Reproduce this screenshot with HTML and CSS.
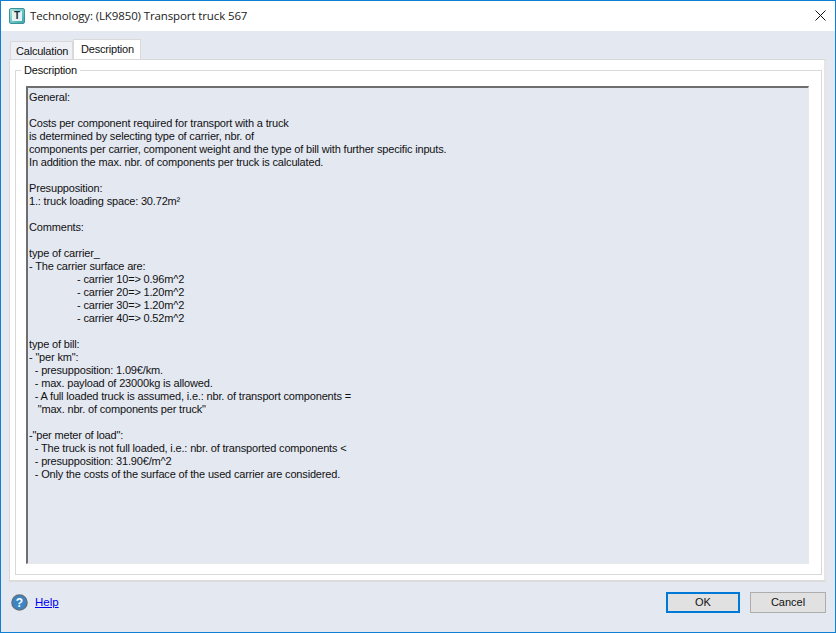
FILE: index.html
```html
<!DOCTYPE html>
<html lang="en">
<head>
<meta charset="utf-8">
<title>Technology</title>
<link rel="stylesheet" href="styles.css">
</head>
<body>
<div class="window">
  <header class="titlebar">
    <span class="app-icon"><span class="app-icon-face">T</span></span>
    <span class="title">Technology: (LK9850) Transport truck 567</span>
    <svg class="close" width="11" height="11" viewBox="0 0 11 11"><path d="M0.5 0.5L10.5 10.5M10.5 0.5L0.5 10.5" stroke="#111" stroke-width="1" fill="none"/></svg>
  </header>
  <main class="content">
    <nav class="tabs">
      <span class="tab">Calculation</span>
      <span class="tab tab-active">Description</span>
    </nav>
    <section class="panel">
      <fieldset class="group">
        <legend class="legend">Description</legend>
        <pre class="memo">General:

Costs per component required for transport with a truck
is determined by selecting type of carrier, nbr. of
components per carrier, component weight and the type of bill with further specific inputs.
In addition the max. nbr. of components per truck is calculated.

Presupposition:
1.: truck loading space: 30.72m²

Comments:

type of carrier_
- The carrier surface are:
<span class="indent">- carrier 10=&gt; 0.96m^2</span>
<span class="indent">- carrier 20=&gt; 1.20m^2</span>
<span class="indent">- carrier 30=&gt; 1.20m^2</span>
<span class="indent">- carrier 40=&gt; 0.52m^2</span>

type of bill:
- "per km":
  - presupposition: 1.09€/km.
  - max. payload of 23000kg is allowed.
  - A full loaded truck is assumed, i.e.: nbr. of transport components =
   "max. nbr. of components per truck"

-"per meter of load":
  - The truck is not full loaded, i.e.: nbr. of transported components &lt;
  - presupposition: 31.90€/m^2
  - Only the costs of the surface of the used carrier are considered.</pre>
      </fieldset>
    </section>
    <footer class="footer">
      <svg class="help-icon" width="17" height="17" viewBox="0 0 17 17">
        <circle cx="8.5" cy="8.5" r="7.5" fill="#3b86c6" stroke="#5f7181" stroke-width="1.6"/>
        <text x="8.5" y="13" text-anchor="middle" class="help-q">?</text>
      </svg>
      <a class="help-link" href="#">Help</a>
      <span class="spacer"></span>
      <button class="btn btn-default">OK</button>
      <button class="btn">Cancel</button>
    </footer>
  </main>
</div>
</body>
</html>
```
FILE: styles.css
```css
* { box-sizing: border-box; }
html, body { margin: 0; padding: 0; }
body { width: 836px; height: 633px; overflow: hidden; font-family: "Liberation Sans", Arial, sans-serif; }
.window { width: 836px; height: 633px; border: 1px solid #0f7fd6; display: flex; flex-direction: column; background: #e4e8f1; }
.titlebar { height: 30px; flex: none; background: #fff; display: flex; align-items: center; padding: 0 9px 0 8px; }
.app-icon { width: 16px; height: 16px; flex: none; padding: 2px; border-radius: 2px; background: linear-gradient(135deg, #a5e6e2, #3aa6ab); border: 1px solid #3d9299; }
.app-icon-face { display: block; width: 10px; height: 10px; background: #e6f3f2; color: #163035; font: bold 10px/10px "Liberation Sans", sans-serif; text-align: center; }
.title { margin-left: 5px; font: 11.5px/16px "Open Sans", sans-serif; letter-spacing: -0.12px; color: #222; flex: 1; }
.close { flex: none; margin-bottom: 1px; }
.content { flex: 1; display: flex; flex-direction: column; padding: 8px 8px 0 8px; min-height: 0; }
.tabs { display: flex; align-items: flex-end; height: 20px; padding-left: 1px; flex: none; }
.tab { height: 18px; width: 63px; padding: 3px 0 0 5px; font-size: 11px; line-height: 13px; letter-spacing: -0.2px; color: #111; background: #eef0f5; border: 1px solid #d9d9d9; border-bottom: 0; white-space: nowrap; }
.tab-active { height: 20px; width: 68px; background: #fff; padding: 3px 0 0 7px; }
.panel { height: 523px; flex: none; background: #fff; border: 1px solid #d9d9d9; border-right: 3px solid #e6e6e6; border-bottom: 2px solid #dcdcdc; padding: 3px 2px 5px 5px; }
.group { height: 100%; margin: 0; padding: 9px 11px 10px 10px; border: 1px solid #d9d9d9; background: #fff; min-width: 0; }
.legend { font-size: 11px; line-height: 14px; padding: 0 3px; margin-left: -5px; color: #111; letter-spacing: -0.2px; }
.memo { margin: 0; height: 478px; width: 783px; background: #e4e8f1; border-top: 2px solid #6e6e6e; border-left: 2px solid #6e6e6e; border-right: 1px solid #e8e8e8; border-bottom: 1px solid #e8e8e8; padding: 3px 0 0 1px; font: 11px/13px "Liberation Sans", sans-serif; letter-spacing: -0.17px; color: #111; overflow: hidden; white-space: pre; }
.indent { padding-left: 48px; }
.footer { flex: 1; display: flex; align-items: center; padding: 0 1px 10px 2px; }
.help-icon { flex: none; }
.help-q { font: bold 12px "Liberation Sans", sans-serif; fill: #fff; }
.help-link { margin-left: 7px; font-size: 11.5px; color: #0000f0; }
.spacer { flex: 1; }
.btn { width: 76px; height: 21px; margin-left: 8px; font: 11px "Liberation Sans", sans-serif; color: #111; background: #e1e1e1; border: 1px solid #adadad; padding: 0; }
.btn-default { border: 2px solid #0078d7; width: 74px; margin-left: 0; margin-right: 2px; }
```
